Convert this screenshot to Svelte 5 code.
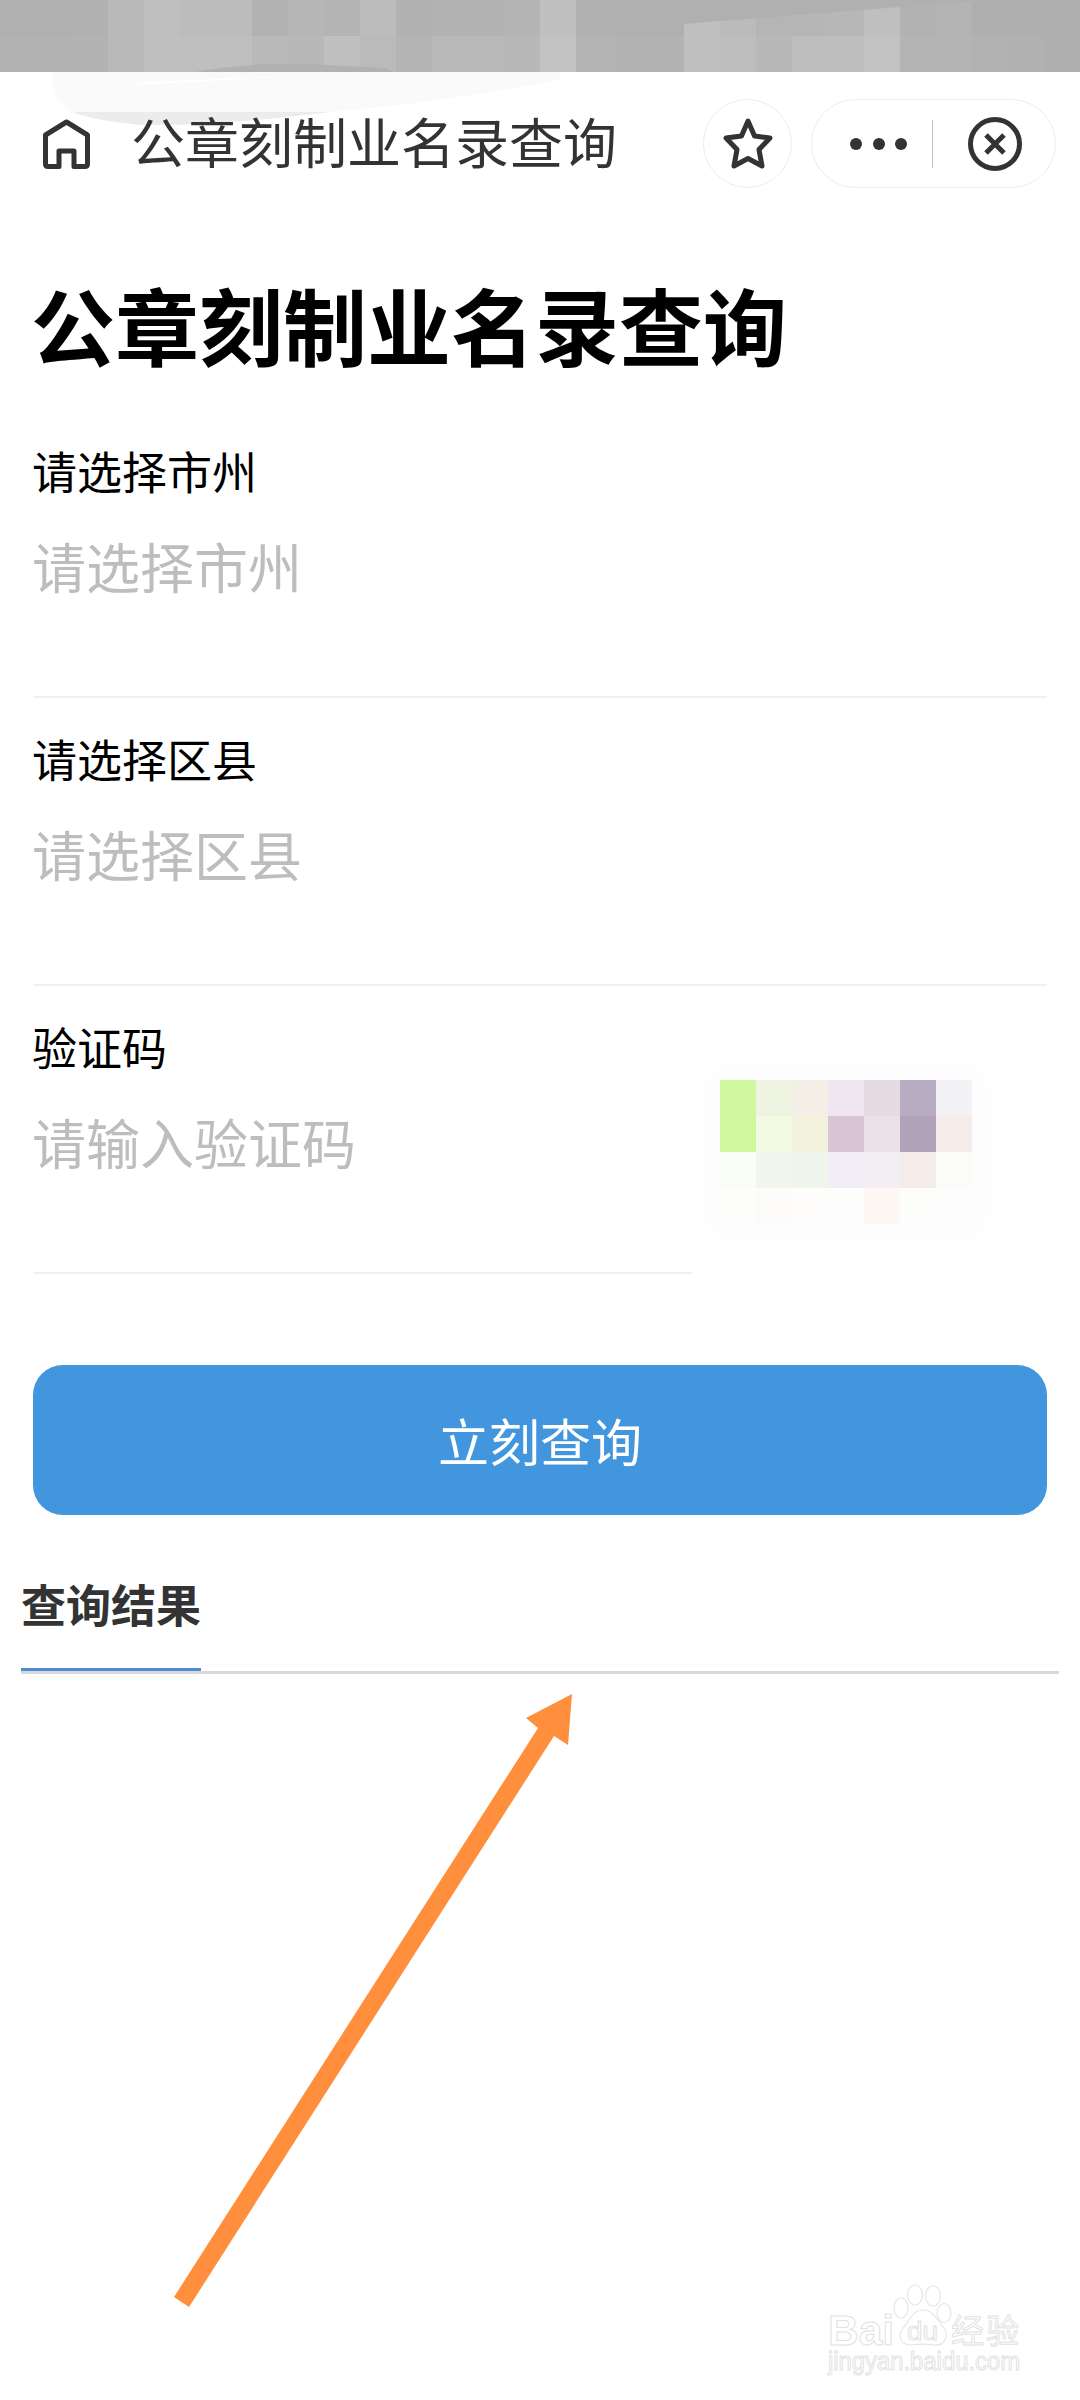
<script>
  const bandTop = ['#b0b0b0','#b0b0b0','#b1b1b1','#b9b9b9','#bfbfbf','#bcbcbc','#bcbcbc','#b2b2b2','#b6b6b6','#b4b4b4','#bcbcbc','#b1b1b1','#b3b3b3','#b3b3b3','#b4b4b4','#c0c0c0','#b0b0b0','#b0b0b0','#b0b0b0','#c0c0c0','#bbbbbb','#b5b5b5','#b6b6b6','#b7b7b7','#bfbfbf','#b2b2b2','#b4b4b4','#afafaf','#afafaf','#afafaf'];
  const bandBottom = ['#b2b2b2','#b2b2b2','#b3b3b3','#b9b9b9','#c0c0c0','#bfbfbf','#bfbfbf','#b9b9b9','#b8b8b8','#c0c0c0','#bababa','#b4b4b4','#b9b9b9','#b9b9b9','#b8b8b8','#c2c2c2','#b4b4b4','#b3b3b3','#b3b3b3','#c0c0c0','#bdbdbd','#b8b8b8','#bdbdbd','#bebebe','#c2c2c2','#b4b4b4','#b4b4b4','#b2b2b2','#b1b1b1','#afafaf'];

  const captcha = [
    '#cff8a0','#eff4e2','#f4efe6','#f0e6ef','#e6dbe3','#b8acc2','#f2f1f5',
    '#cff89e','#f2fae2','#f3f2dc','#d9c5d6','#ebe1e8','#b0a3b9','#f5ecea',
    '#fafcf6','#f3f6ec','#f0f5ec','#f3eef5','#f3eef4','#f5ecea','#fbfbf8',
    '#fdfdfb','#fdfbf9','#fefdfb','#fdfdfd','#fdf8f4','#fdfdfc','#fdfdfd'
  ];

  const selects = ['请选择市州', '请选择区县'];
</script>

<div class="page">
  <div class="band">
    {#each [...bandTop, ...bandBottom] as c}
      <i style="background:{c}"></i>
    {/each}
    <svg class="band-edge" width="1080" height="72" viewBox="0 0 1080 72">
      <path d="M684 24 L900 7 L1000 0 L684 0Z" fill="#b0b0b0" />
      <path d="M195 72 Q250 62 310 64 L385 68 L395 72Z" fill="#b1b1b1" />
    </svg>
  </div>

  <header class="nav">
    <svg class="ghost" width="560" height="60" viewBox="0 0 560 60">
      <path d="M52 0 L560 0 L560 8 Q430 32 330 40 L72 40 Q50 28 52 0Z" fill="#fafafa" />
      <path d="M72 40 L330 40 Q220 54 145 53 Q100 50 72 40Z" fill="#ececec" />
      <path d="M130 14 Q280 4 400 0 L140 10Z" fill="#fff" />
    </svg>
    <svg class="home" width="47" height="50" viewBox="0 0 47 50" fill="none" stroke="#333" stroke-width="5" stroke-linejoin="round">
      <path d="M23.5 3 L44.5 16 V45 Q44.5 47.5 42 47.5 H31 V32 H16 V47.5 H5 Q2.5 47.5 2.5 45 V16Z" />
    </svg>
    <span class="nav-title">公章刻制业名录查询</span>
    <div class="star-btn">
      <svg width="50" height="52" viewBox="0 0 50 52" fill="none" stroke="#333" stroke-width="5" stroke-linejoin="round">
        <path d="M25 3 L31.5 18 L47 20 L36 31.5 L39 48 L25 40.5 L11 48 L14 31.5 L3 20 L18.5 18Z" />
      </svg>
    </div>
    <div class="capsule">
      <div class="dots"><b></b><b></b><b></b></div>
      <span class="sep"></span>
      <svg width="54" height="54" viewBox="0 0 54 54" fill="none" stroke="#333" stroke-width="5">
        <circle cx="27" cy="27" r="24.5" />
        <path d="M18 18 L36 36 M36 18 L18 36" />
      </svg>
    </div>
  </header>

  <main class="content">
    <h1>公章刻制业名录查询</h1>

    {#each selects as s}
      <div class="field">
        <div class="label">{s}</div>
        <div class="placeholder">{s}</div>
      </div>
    {/each}

    <div class="code-row">
      <div class="field code">
        <div class="label">验证码</div>
        <div class="placeholder">请输入验证码</div>
      </div>
      <div class="captcha">
        {#each captcha as c}
          <i style="background:{c}"></i>
        {/each}
      </div>
    </div>

    <button class="submit">立刻查询</button>
  </main>

  <section class="tabs">
    <div class="tab">查询结果</div>
  </section>

  <svg class="overlay" width="1080" height="2400" viewBox="0 0 1080 2400">
    <path d="M174 2297 L538 1728 L526 1718 L572 1694 L568 1745 L554 1736 L189 2307Z" fill="#ff8f3d" />
    <g fill="#fff" stroke="#e6e6e6" stroke-width="1.2">
      <ellipse cx="901" cy="2308" rx="7" ry="10" />
      <ellipse cx="915" cy="2295" rx="7.5" ry="10" />
      <ellipse cx="933" cy="2296" rx="7.5" ry="10" />
      <ellipse cx="944" cy="2313" rx="7" ry="9.5" />
      <path d="M923 2310 C934 2310 938 2322 944 2328 C950 2336 944 2346 934 2345 C927 2344 918 2344 911 2345 C901 2345 897 2336 903 2328 C909 2322 912 2310 923 2310Z" />
    </g>
    <g class="mark" fill="#fff" stroke="#e2e2e2" stroke-width="1">
      <text x="828" y="2345" font-size="42" font-weight="700" textLength="66" lengthAdjust="spacingAndGlyphs">Bai</text>
      <text x="907" y="2340" font-size="26" textLength="31" lengthAdjust="spacingAndGlyphs">du</text>
      <text x="951" y="2343" font-size="33" textLength="68">经验</text>
      <text x="828" y="2370" font-size="25" textLength="192" lengthAdjust="spacingAndGlyphs">jingyan.baidu.com</text>
    </g>
  </svg>
</div>

<style>
  :global(body) {
    background: #fff;
  }

  .page {
    position: relative;
    width: 1080px;
    height: 2400px;
    overflow: hidden;
    background: #fff;
    font-family: "Noto Sans CJK SC", "Noto Sans", sans-serif;
  }

  .band {
    position: relative;
    display: grid;
    grid-template-columns: repeat(30, 36px);
    grid-auto-rows: 36px;
    height: 72px;
  }
  .band i, .captcha i {
    display: block;
  }
  .band-edge {
    position: absolute;
    left: 0;
    top: 0;
  }

  .nav {
    position: relative;
    display: flex;
    align-items: center;
    height: 143px;
    padding: 0 24px 0 43px;
    box-sizing: border-box;
  }
  .ghost {
    position: absolute;
    left: 0;
    top: 0;
  }
  .home {
    position: relative;
    margin-top: 1px;
    flex: none;
  }
  .nav-title {
    position: relative;
    margin: -6px 0 0 41px;
    font-size: 54px;
    line-height: 60px;
    color: #333;
    white-space: nowrap;
  }
  .star-btn {
    display: flex;
    align-items: center;
    justify-content: center;
    width: 89px;
    height: 89px;
    margin-left: auto;
    border: 1px solid #ececec;
    border-radius: 50%;
    box-sizing: border-box;
  }
  .capsule {
    display: flex;
    align-items: center;
    width: 245px;
    height: 89px;
    margin-left: 19px;
    padding-left: 38px;
    border: 1px solid #ececec;
    border-radius: 45px;
    box-sizing: border-box;
  }
  .dots {
    display: flex;
    gap: 10.5px;
  }
  .dots b {
    width: 12px;
    height: 12px;
    border-radius: 50%;
    background: #333;
  }
  .sep {
    width: 1px;
    height: 48px;
    margin: 0 35px 0 25px;
    background: #c4c4c4;
  }

  .content {
    padding: 0 33px 0 34px;
  }
  h1 {
    margin: 67px 0 44px -3px;
    font-size: 84px;
    line-height: 84px;
    font-weight: 700;
    color: #000;
    white-space: nowrap;
  }

  .field {
    height: 288px;
    padding-top: 39px;
    border-bottom: 2px solid #f0f0f0;
    box-sizing: border-box;
  }
  .label {
    margin-left: -2px;
    font-size: 45px;
    line-height: 44px;
    color: #000;
  }
  .placeholder {
    margin: 43px 0 0 -2px;
    font-size: 54px;
    line-height: 60px;
    color: #bdbdbd;
  }

  .code-row {
    display: flex;
    align-items: flex-start;
  }
  .field.code {
    width: 658px;
    flex: none;
  }
  .captcha {
    display: grid;
    grid-template-columns: repeat(7, 36px);
    grid-auto-rows: 36px;
    margin: 94px 0 0 28px;
    box-shadow: 0 0 40px 24px #fdfdfd;
  }

  .submit {
    display: block;
    width: 1014px;
    height: 150px;
    margin: 91px 0 0 -1px;
    padding: 0;
    border: none;
    border-radius: 30px;
    background: #4296dd;
    color: #fff;
    font-family: inherit;
    font-size: 51px;
    line-height: 60px;
  }

  .tabs {
    margin: 59px 21px 0;
    border-bottom: 3px solid #d9d9d9;
  }
  .tab {
    width: 180px;
    padding-bottom: 34px;
    border-bottom: 3px solid #4a90d0;
    font-size: 45px;
    line-height: 60px;
    font-weight: 700;
    color: #333;
    white-space: nowrap;
  }

  .overlay {
    position: absolute;
    left: 0;
    top: 0;
    pointer-events: none;
  }
  .mark text {
    font-family: "Liberation Sans", "Noto Sans CJK SC", sans-serif;
  }
</style>
